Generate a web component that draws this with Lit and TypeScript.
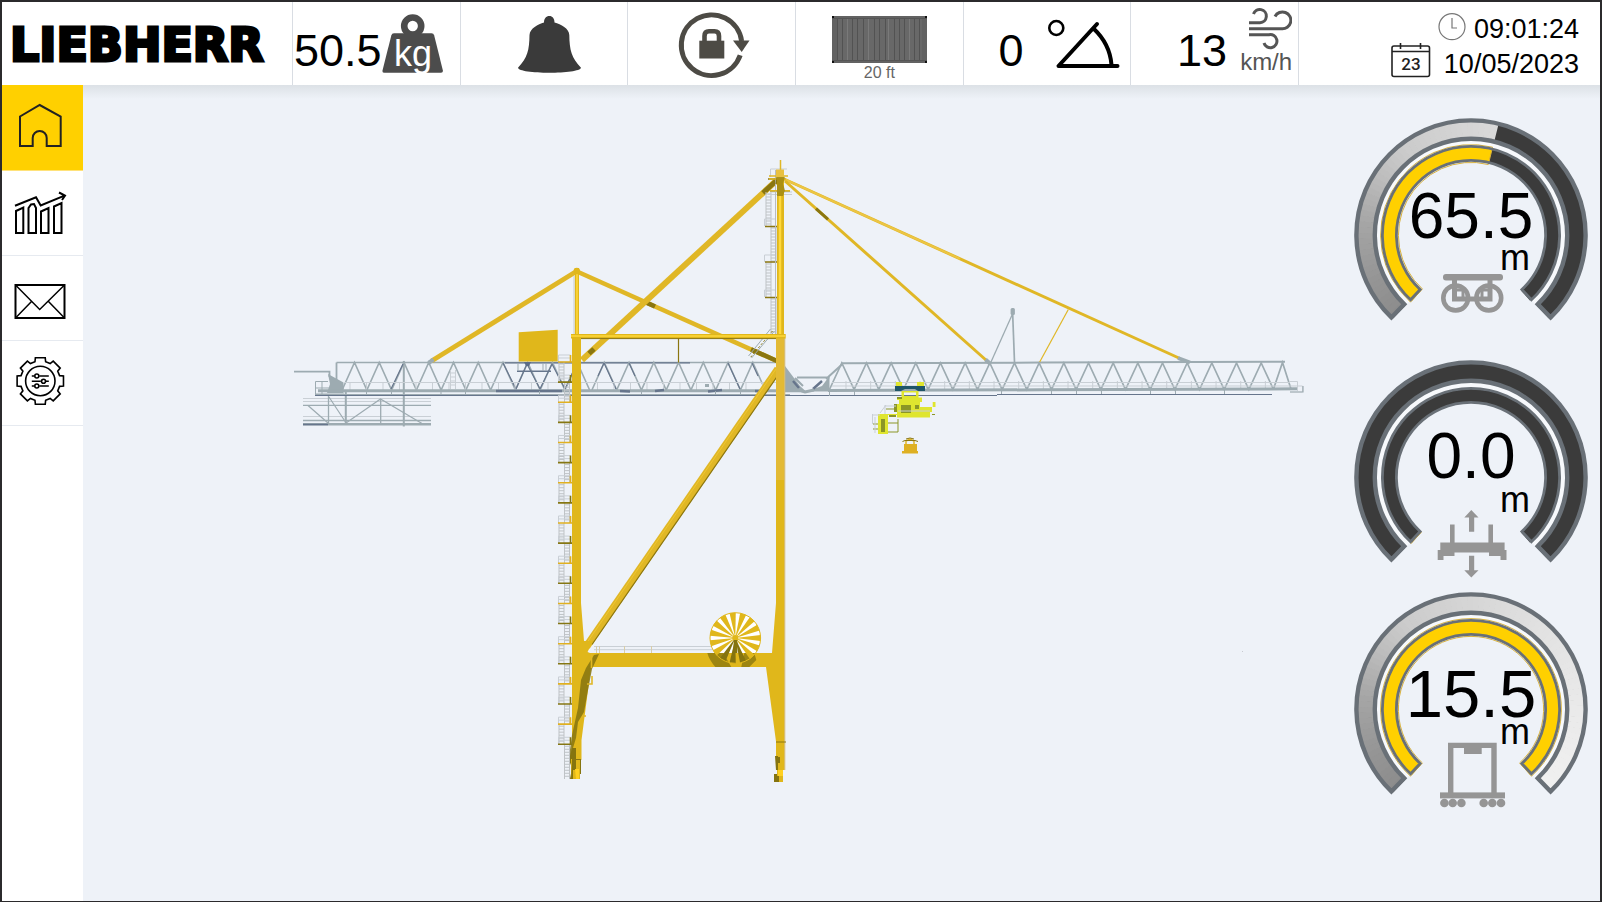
import { LitElement, html, svg, css } from "lit";
import { customElement, property } from "lit/decorators.js";

type GaugeKind = "travel" | "hoist" | "gantry";

const polar = (r: number, deg: number): [number, number] => {
  const a = (deg * Math.PI) / 180;
  return [r * Math.sin(a), -r * Math.cos(a)];
};
const pt = (p: [number, number]) => `${p[0].toFixed(2)} ${p[1].toFixed(2)}`;

/** Closed ring segment between two radii; angles are measured clockwise from the top. */
const band = (r0: number, r1: number, a0: number, a1: number) => {
  const large = a1 - a0 > 180 ? 1 : 0;
  return `M${pt(polar(r1, a0))}A${r1} ${r1} 0 ${large} 1 ${pt(polar(r1, a1))}L${pt(polar(r0, a1))}A${r0} ${r0} 0 ${large} 0 ${pt(polar(r0, a0))}Z`;
};

const SHADES: [number, number][] = [
  [-138, 140], [-110, 152], [-85, 166], [-60, 188], [-40, 203], [0, 214], [40, 226], [90, 234], [138, 241],
];
const shade = (a: number) => {
  for (let i = 1; i < SHADES.length; i++) {
    const [a1, v1] = SHADES[i];
    const [a0, v0] = SHADES[i - 1];
    if (a <= a1) return Math.round(v0 + ((v1 - v0) * (a - a0)) / (a1 - a0));
  }
  return 241;
};

@customElement("crane-gauge")
export class CraneGauge extends LitElement {
  @property() kind: GaugeKind = "travel";
  @property() value = "";
  @property({ type: Number }) level = 0;
  @property({ type: Number }) baseline = 0;

  static styles = css`
    :host { display: block; }
    svg { display: block; width: 100%; overflow: visible; font-family: "Liberation Sans", Arial, sans-serif; }
    .value { font-size: 64px; text-anchor: middle; }
    .value.large { font-size: 67px; }
    .unit { font-size: 36px; text-anchor: middle; }
    .edge { fill: none; stroke: #697077; stroke-linejoin: miter; }
    .off { fill: #3b3b3b; }
    .on { fill: #ffd000; }
    .rim { fill: none; stroke: #d9b23c; stroke-width: 1; }
    .gap { fill: #f7f9fc; }
    .glyph { fill: #959595; stroke: none; }
    .line { fill: none; stroke: #959595; }
  `;

  private icon() {
    if (this.kind === "travel")
      return svg`
        <rect class="glyph" x="-28" y="39" width="60" height="6.6" rx="3"/>
        <circle class="line" cx="-15.3" cy="63" r="12.4" stroke-width="4.6"/>
        <circle class="line" cx="17.8" cy="63" r="12.4" stroke-width="4.6"/>
        <path class="line" stroke-width="5" d="M-16.5 45V64H19V45"/>
        <path class="line" stroke-width="3" d="M-19 55H-8V63M21 55H11V63"/>`;
    if (this.kind === "hoist")
      return svg`
        <path class="glyph" d="M-6.700 40.600 0.300 33 7.500 40.600H3.200V54.700H-2V40.600Z"/>
        <path class="glyph" d="M-6.700 93.200 0.300 100.600 7.500 93.200H3.200V78.700H-2V93.200Z"/>
        <path class="glyph" d="M-30.700 65.500H-21V47.500H-16.400V65.500H17.400V47.500H22V65.500H33.600V73H35.500V83H29.500V79H18V75.600H-16.500V79H-27.500V83H-33.300V73H-30.700Z"/>`;
    return svg`
      <path class="line" stroke-width="5.4" d="M-20.300 84V36.400H23V84"/>
      <rect class="glyph" x="-7" y="38" width="17.700" height="7"/>
      <rect class="glyph" x="-31" y="83.400" width="65" height="6"/>
      ${[-26.6, -18.3, -9.6, 12.7, 21.3, 30].map((x) => svg`<circle class="glyph" cx=${x} cy="94" r="4.300"/>`)}`;
  }

  render() {
    const A = 137;
    const B = 138;
    const outerEnd = -A + (2 * A + 0.5) * this.level;
    const innerEnd = -B + 2 * B * this.level;
    const parts = [];
    if (this.level > 0) {
      const stop = Math.min(outerEnd, A);
      for (let a = -A; a < stop; a += 3) {
        const v = shade(a);
        parts.push(svg`<path d=${band(96, 114, a, Math.min(a + 3.4, stop))} fill=${`rgb(${v},${v},${v})`}/>`);
      }
    }
    return html`
      <svg viewBox="-117 -117 234 220" role="img" aria-label=${`${this.value} m`}>
        <path class="gap" d=${band(89, 96, -A, A)} />
        <path class="off" d=${band(97, 114, -A, A)} />
        ${parts}
        <path class="edge" stroke-width="4.400" d=${band(96.2, 114.6, -A + 1, A - 1)} />
        <path class="off" d=${band(75, 88, -B, B)} />
        ${this.level > 0
          ? svg`<path class="on" d=${band(75, 88, -B, Math.min(innerEnd, B))}/>
                <path class="rim" d=${band(72.6, 90.4, -B, Math.min(innerEnd, B))}/>`
          : svg`<path class="rim" d=${`M${pt(polar(74, -B))}L${pt(polar(90, -B))}`}/>`}
        <path class="edge" stroke-width="2.800" d=${band(74.6, 88.6, -B + 1, B - 1)} />
        <text class="value ${this.kind === "gantry" ? "large" : ""}" x="0" y=${this.baseline}>${this.value}</text>
        <text class="unit" x="44" y="35">m</text>
        ${this.icon()}
      </svg>
    `;
  }
}

@customElement("crane-scene")
export class CraneScene extends LitElement {
  static styles = css`
    :host { display: block; }
    svg { display: block; width: 100%; }
    .y { fill: #e0b71b; }
    .ys { fill: none; stroke: #e0b726; }
    .hi { fill: none; stroke: #ffd83c; }
    .dk { fill: #85740f; }
    .dks { fill: none; stroke: #8a7610; }
    .g { fill: #9dabb1; }
    .gs { fill: none; stroke: #9dabb1; }
    .bs { fill: none; stroke: #66758c; }
    .ls { fill: none; stroke: #c9cfd5; stroke-width: 1; }
    .lime { fill: #dfe52f; }
    .olive { fill: #8b9626; }
    .olives { fill: none; stroke: #8b9626; stroke-width: 1; }
  `;

  private zigzag(first: number, step: number, count: number, top: number, bottom: number) {
    let d = `M${first - step / 2} ${bottom}`;
    for (let i = 0; i < count; i++) d += `L${first + i * step} ${top}L${first + (i + 0.5) * step} ${bottom}`;
    return d;
  }

  private ladder(x: number, y0: number, y1: number) {
    let d = `M${x} ${y0}V${y1}M${x + 5} ${y0}V${y1}`;
    for (let y = y0 + 2; y < y1; y += 3) d += `M${x} ${y}H${x + 5}`;
    return svg`<path d=${d} fill="none" stroke="#bfc3c6" stroke-width="1"/>`;
  }

  private stairs() {
    const out = [];
    for (let i = 0; i < 20; i++) {
      const y = 362 + i * 20.12;
      const even = i % 2 === 0;
      const end = i === 19 ? 779 : y + 20;
      out.push(this.ladder(even ? 559 : 564.5, y, end));
      out.push(svg`<path class="ls" d=${`M558.500 ${y}V${y - 7}H570.500M558.500 ${y - 4}H570`}/>`);
      out.push(svg`<path fill="none" stroke=${even ? "#e0b020" : "#857612"} stroke-width="1.600" d=${`M558 ${y}H572M570.500 ${y}V${y - 7}`}/>`);
    }
    return out;
  }

  private reel() {
    const spokes = [];
    for (let i = 0; i < 15; i++) {
      const a = 90 + i * 24;
      const under = a > 146 && a < 224;
      spokes.push(svg`<path d=${`M0 0L${pt(polar(25.5, a - 7))}L${pt(polar(25.5, a + 7))}Z`} fill=${under ? "#85740f" : "#e0b71b"}/>`);
    }
    return svg`<g transform="translate(735.300 638)">
      <path d="M-25.500 0A25.500 25.500 0 0 1 25.500 0Q25.500 8 20 15H-20Q-25.500 8-25.500 0Z" fill="#fff"/>
      <path class="dk" opacity=".75" d="M-28 15H-12L-4 29H-20Q-26 22-28 15ZM19 15L21 22 14 29H6L9 15Z"/>
      ${spokes}
      <circle r="25.300" fill="none" stroke="#e0b71b" stroke-width="1"/>
      <circle r="3" class="y"/><path class="dk" d="M-1.500 2H2V15H-2Z"/>
    </g>`;
  }

  private posts(x0: number, x1: number, step: number, y0: number, y1: number) {
    let d = "";
    for (let x = x0; x < x1; x += step) d += `M${x} ${y0}V${y1}`;
    return svg`<path class="ls" d=${d}/>`;
  }

  render() {
    return html`
      <svg viewBox="83 85 1257 815" role="img" aria-label="Container crane side view">
        <!-- rear platform -->
        <path class="gs" stroke-width="1.800" d="M294 371.700H329.500V377M336.500 362.500V390" />
        <path class="g" d="M328 374L343.500 382.500V393H327L330 384Z" />
        <path class="gs" d="M315.500 381.500H328M315.500 381.500V394H344M315.500 388H344M322 381.500V394" />
        <path class="ls" d="M303 398.500H431M303 401.500H431M303 416.500H431" />
        <path class="gs" stroke-width="1.300" d="M303 405.400H431M303 420.500H431M380.700 399V423M328.500 395V423" />
        <path class="gs" stroke-width="2.600" d="M303 424.300H431" />
        <path class="bs" stroke-width="1.600" d="M303 424.500H328" />
        <path class="gs" stroke-width="2" d="M345.800 392V423M403.800 361V426.500" />
        <path class="gs" stroke-width="1.200" d="M308 405.500L328 423M329 397L345.500 422M346 423L380.500 399L422 423.500" />

        <!-- boom truss, rear half -->
        <path class="gs" stroke-width="1.500" d="M336.500 362.600H776" />
        <path class="bs" stroke-width="1.200" d="M505 362.800H690" />
        <path class="gs" stroke-width="1.600" d=${this.zigzag(354.5, 24.75, 10, 362.5, 390)} />
        <path class="gs" stroke-width="1.600" d=${this.zigzag(604.3, 24.75, 7, 362.5, 390)} />
        <path class="bs" stroke-width="1.200" d="M503 363L516 389L527 364L540 389L552 364L565 389L573 372M604 363L598 376M604 363L616 389M629 363L635 376M728 363L740 389M752 363L758 376M403 364L391 389" />
        <path class="ls" d="M345 382.500H776" />
        ${this.posts(350, 776, 16.5, 382.5, 390)}
        <path class="gs" stroke-width="3" d="M318 390.700H800" />
        <path class="bs" stroke-width="2.600" d="M496 391H562M620 391L630 391.500M655 391L664 390M708 391.500L722 390M755 391L766 391.500" />
        <path class="bs" stroke-width="1" d="M315 395.500H997" />
        <path class="gs" d="M315 394.500H790M366.500 391V395M391.500 391V395M441 391V395M465.500 391V395M539.500 391V395M641.500 391V395M715.500 391V395M740.500 391V395" />
        <path class="g" d="M705 384h4v3h-4z" />
        <path class="ls" d="M450.500 370V389M455.500 370V389M450 373H456M450 377H456M450 381H456M450 385H456" />

        <!-- machinery house -->
        <path class="y" d="M518.700 332.300L557.700 329.700V361.500H518.700Z" />
        <path class="bs" stroke-width="1.400" d="M517 371.300H551" />
        <path class="gs" d="M518 364V371M543 363V371M546 363V371" />
        <path d="M524 362h7l-2 4h-3z" fill="#5a6a86" />

        <!-- boom truss, front half -->
        <path class="g" d="M785 366L800 386L806 391.500H785ZM829.500 376V391.500H806L822 386Z" />
        <path class="gs" stroke-width="2" d="M797 377.400H829.500M826 379L842.500 364M795 378L803 386" />
        <path class="bs" stroke-width="2.400" d="M793 381L799 388M813 389L822 381" />
        <path class="gs" stroke-width="3" d="M798 390L805 392L814 390" />
        <path class="gs" stroke-width="2" d="M841 363.300L1040 362.600L1285 361.700" />
        <path class="gs" stroke-width="1.700" d=${this.zigzag(841.8, 24.67, 18, 363, 389.5)} />
        <path class="gs" stroke-width="1.700" d="M1273.500 389L1282.500 362.500L1291 389" />
        <path class="ls" d="M832 382.500H1290M832 386H1290" />
        ${this.posts(846, 1285, 24.67, 381, 389)}
        <path class="gs" stroke-width="3" d="M828 390.500L1040 389.800L1298 388.800" />
        <path class="bs" stroke-width="1" d="M997 394.500H1272" />
        <path class="gs" d="M829.500 390V396M854.500 390V395M1001.500 390V394M1051.500 390V394M1076.500 390V394M1101.500 390V394M1150.500 390V394M1175.500 390V394M1224.500 390V394" />
        <path class="ls" stroke-width="1.500" d="M1290 381.500H1297.500V391M1290 386H1302.500V392H1290" />
        <path class="gs" stroke-width="1.200" d="M1290 392H1303V386" />

        <!-- auxiliary mast and hangers -->
        <path class="gs" stroke-width="1.300" d="M1012.500 314L991 362" />
        <path class="gs" stroke-width="1.700" d="M1012.600 312L1014.500 362" />
        <rect class="g" x="1010.600" y="308" width="4.300" height="7" rx="1.500" />
        <path class="ys" stroke-width="1.200" d="M1068.300 309.500L1039.700 362" />

        <!-- stays -->
        <path class="ys" stroke-width="3" d="M784 179L1180 358.500" />
        <path fill="none" stroke="#ecc544" stroke-width="2" d="M784 179L960 258.800" />
        <path class="ys" stroke-width="3" d="M785 181L986.500 360.500" />
        <path class="dks" stroke-width="3" d="M816 208.600L828 219.300" />
        <path class="gs" stroke-width="4" d="M1178 358L1190 362.500M985.500 359.500L990.500 364" />
        <path class="ys" stroke-width="4.800" d="M431.500 361L577 271" />
        <path class="gs" stroke-width="4" d="M428.500 363L433.500 359.500" />
        <path class="ys" stroke-width="4.600" d="M577 271.500L777 361" />
        <path class="dks" stroke-width="4.600" d="M646 302.300L655 306.500M751 349.300L777 361" />
        <path class="ys" stroke-width="6" d="M582 360L777 180" />
        <path class="dks" stroke-width="5" d="M589 353.500L594 349M763 193L777 180" />
        <path class="dks" stroke-width="1.200" d="M678.500 338V362.500" />

        <!-- mast ladders -->
        ${this.ladder(766, 192, 226)} ${this.ladder(771, 226, 262)} ${this.ladder(766, 262, 297)} ${this.ladder(771, 297, 334)}
        <path class="ls" d="M764.500 226V219H776M764.500 262V255H776M764.500 297V290H776M770.500 177V169H787M768 194.500H792M770 192H792" />
        <path class="dks" stroke-width="1.500" d="M765 226.500H777M765 262H777M765 297.500H777M768 179H777M770 190.800H790" />
        <path class="gs" d="M770.500 329L748.500 356M774.500 331L751.500 358" />
        <path class="dks" stroke-dasharray="2 2" d="M772.500 331L750 358" />

        <!-- masts and top beam -->
        <rect x="775" y="170" width="1" height="164" fill="#b9bcbf" />
        <rect class="y" x="777" y="176" width="7" height="160" />
        <path class="hi" stroke-width="2.500" d="M780 196V335" />
        <path class="ys" stroke-width="1.500" d="M780.500 160V170M769 176H788M769 179H786M770 190.800H790" />
        <rect x="776" y="169.500" width="8" height="8" fill="#e8c040" />
        <path class="dk" d="M776 177H785L783 184L785 190L783 196H777V184L775 184Z" opacity=".6" />
        <rect class="y" x="574.800" y="268" width="4.200" height="68" />
        <path class="hi" stroke-width="1.600" d="M577 273V334" />
        <path class="ls" stroke-width="1.500" d="M574 276V334" />
        <circle class="y" cx="576.800" cy="271" r="3.200" />

        <!-- brace and portal -->
        <path class="ys" stroke-width="7.500" d="M778 369L586.500 646.500" />
        <path class="dks" stroke-width="1.200" d="M780.600 371.500L592 644.500" />
        <path class="hi" stroke-width="1" opacity=".5" d="M776 369L585 645.500" />
        <path class="y" d="M572 335H581V603L584 641H593L587.500 652L590 653H772L776 603V335H785V770H776V741.500L766 667H591L581.500 740V760H572Z" />
        <path fill="#e3ba35" d="M776 338H785V480H776Z" />
        <path fill="#d8bd70" d="M784 338H785.300V770H784Z" />
        <path class="y" d="M571 334H785.700V338.500H571Z" />
        <path class="hi" stroke-width="1.400" d="M571 336H785" />
        <path class="dks" stroke-width="1" d="M581 338.600H776" />

        <!-- lower walkway -->
        <path class="ls" d="M594 646.500H713M594 649.700H713" />
        <path stroke="#d8cda8" fill="none" d="M596.500 646V653M599.500 646V653M624.500 646V653M651.500 646V653" />
        <path class="dk" opacity=".85" d="M594 655L599 654L592 669L588 690L584 712L578 722L576 738L573 748L572 758L569 757L572 735L578 708L581 680L586 668Z" />
        <path class="ys" stroke-width="1.600" d="M591.500 654V668M587 684H592V676M582 716H586" />
        ${this.reel()}

        <!-- feet -->
        <path class="dk" d="M572 748L576 748V760H581V774H578L572 779H570L572 768L569 760ZM775 756H778V770H776ZM774 774H777V782H774Z" />
        <path class="y" d="M571 779V759H580V779ZM777 770H783V782H777Z" />
        <path class="dk" d="M572 760H576V770H573V779H571ZM778 757H780V763H778ZM777 776H779V782H777Z" />
        <path fill="#ffd020" d="M575 769H579V779H576ZM778 770H783V776H778Z" />
        <path class="dks" stroke-width="1" d="M776 742H786M572 759.500H581" />
        <g>${this.stairs()}</g>

        <!-- trolley and cabin -->
        <path class="lime" d="M896 382H902V386H896ZM917 382H924V386H917Z" />
        <path fill="#1f5568" d="M895 386H925V391H918L915 389H905L901 391H895Z" />
        <path d="M901.500 391H918.500V399H901.500ZM904 392.500V396H916V392.500Z" fill="#dfe52f" fill-rule="evenodd" />
        <path class="lime" d="M897 397.500H922V402H920V407H930V417.500H897V415H888V434H878V414H897V404H899V400H897Z" />
        <path class="lime" d="M932.700 402H935.500V407H932.700ZM929 407H932V412H929Z" />
        <path class="olive" d="M901 405H911V413H901ZM914 405H919V409H914ZM881 419H885V432H881ZM897 397H902V399H897ZM894 404H897V412H894ZM889 415H896V417H889Z" />
        <path class="lime" d="M911 402H915V415H911Z" />
        <path class="olives" d="M888 423H898M888 432H898V419M873 424H878M873 429H878M932 414.500H935M886 409H897" />
        <path class="ls" d="M872.500 414V424M875 417V433M885 405V414M885 406H896M898 411H930M873 415H880M880 413L886 405" />
        <path d="M904 444H917V451H918V453.500H902V451H904Z" fill="#deb023" />
        <path class="ys" stroke-width="1.500" d="M906 444V441L910 439L914 441V444" />
        <path class="dks" stroke-width="1" d="M902.500 441.500L905 440.500H915L918 441.500M906 439L910 438L914 439" />
        <rect x="1242" y="651" width="1" height="1" fill="#c8cbd0" />
      </svg>
    `;
  }
}

@customElement("app-root")
export class AppRoot extends LitElement {
  static styles = css`
    :host {
      display: flex;
      flex-direction: column;
      box-sizing: border-box;
      min-height: 100vh;
      border: 2px solid #2b2a2c;
      border-bottom-width: 1px;
      background: #eef2f8;
      color: #000;
      font-family: "Liberation Sans", Arial, sans-serif;
    }
    svg { display: block; flex: none; }
    header {
      display: grid;
      grid-template-columns: 290px repeat(6, 5fr) 9fr;
      height: 83px;
      background: #fff;
    }
    .cell {
      box-sizing: border-box;
      display: flex;
      align-items: center;
      border-left: 1px solid #d9dde3;
      min-width: 0;
    }
    .logo {
      display: flex;
      align-items: center;
      padding: 3px 0 0 8px;
      font-family: "DejaVu Sans", sans-serif;
      font-weight: 700;
      font-size: 46px;
      line-height: 52px;
      -webkit-text-stroke: 3px #000;
    }
    .value { font-size: 45px; line-height: 52px; padding-top: 14px; }
    .load { padding-left: 1px; }
    .kg { font-size: 36px; fill: #fff; }
    button.cell {
      margin: 0;
      padding: 0;
      background: none;
      border-width: 0 0 0 1px;
      cursor: pointer;
    }
    .box { flex-direction: column; padding-top: 14px; }
    .small { font-size: 16px; line-height: 16px; color: #666; padding-top: 2px; }
    .angle { justify-content: flex-end; gap: 25px; padding-right: 10px; }
    .wind { justify-content: flex-end; gap: 13px; padding-right: 6px; }
    .speed { display: flex; flex-direction: column; align-items: flex-end; align-self: flex-start; padding-top: 5px; }
    .unit { font-size: 24px; line-height: 24px; color: #555; }
    .clock { flex-direction: column; align-items: flex-end; justify-content: center; padding: 7px 21px 0 0; }
    .row { display: flex; align-items: center; height: 35px; font-size: 27px; gap: 8px; }
    .row.date { gap: 13px; }
    .day { font-family: Roboto, sans-serif; font-weight: 500; font-size: 17px; text-anchor: middle; fill: #222; }
    .body { display: flex; flex: 1; }
    nav { flex: none; width: 81px; background: #fff; }
    nav a {
      display: block;
      box-sizing: border-box;
      height: 85px;
      border-bottom: 1px solid #e6eaf0;
    }
    nav a.active { height: 86px; background: #ffd000; border-color: #ffe27a; }
    nav svg { fill: none; stroke: #000; stroke-width: 2; }
    main {
      flex: 1;
      display: grid;
      grid-template-columns: 1fr 260px;
      align-items: start;
      min-width: 0;
      background: linear-gradient(#dce1e6, #eef2f8 14px);
    }
    .gauges { display: flex; flex-direction: column; gap: 12px; padding: 33px 12px 0 14px; }
    .first { padding-bottom: 10px; }
  `;

  private gear() {
    let d = "";
    for (let i = 0; i < 8; i++) {
      const a = i * 45;
      d += `${i ? "L" : "M"}${pt(polar(20, a - 15.5))}L${pt(polar(23.7, a - 12))}L${pt(polar(23.7, a + 12))}L${pt(polar(20, a + 15.5))}`;
    }
    return svg`<g transform="translate(38.300 41)" stroke-width="1.600">
      <path d=${d + "Z"}/><circle r="14.700"/>
      <path d="M-8.500-5H-6M-1-5H8.500M-8.500 0.300H0.500M5.500 0.300H8.500M-8.500 5H-6M-1 5H8.500"/>
      <circle cx="-3.500" cy="-5" r="2"/><circle cx="3.200" cy="0.300" r="2"/><circle cx="-3.500" cy="5" r="2"/>
    </g>`;
  }

  render() {
    const ribs = [0, 5, 10, 15, 20, 26, 31, 37, 42, 48, 51, 57, 62, 67, 72, 77, 82];
    return html`
      <header>
        <div class="logo">LIEBHERR</div>
        <div class="cell load">
          <span class="value">50.5</span>
          <svg width="61" height="60" viewBox="382 15 61 60">
            <circle cx="412.700" cy="27" r="8.500" fill="none" stroke="#4c4c4c" stroke-width="6.600" />
            <path d="M394 34.300H431.500Q433.600 34.300 434.200 36.500L442.900 71.500Q443.200 73.800 441 73.800H384.500Q382 73.800 382.500 71.500L391.300 36.500Q391.900 34.300 394 34.300Z" fill="#4c4c4c" />
            <text class="kg" x="394" y="67">kg</text>
          </svg>
        </div>
        <button class="cell" aria-label="Alarms">
          <svg width="167" height="83" viewBox="460 2 167 83">
            <path fill="#3a3a3a" d="M548.300 16C551.500 16 553.500 18.500 553.500 22.500C560 24.500 568 28 568.300 35C568.500 50 570.500 58 580 67.700C579.500 71 564 72.700 548.300 72.700C532 72.700 517.500 71 517 67.700C526.500 58 528.300 50 528.500 35C529 28 537 24.500 543 22.500C543 18.500 545.200 16 548.300 16Z" />
          </svg>
        </button>
        <button class="cell" aria-label="Slewing lock">
          <svg width="167" height="83" viewBox="628 2 167 83">
            <path d="M740.200 55.200A30.300 30.300 0 1 1 741.600 41" fill="none" stroke="#4d4b45" stroke-width="5" />
            <path d="M733 40.600H749.500L741.700 52Z" fill="#4d4b45" />
            <rect x="699.300" y="40.700" width="25" height="17.800" fill="#4d4b45" />
            <path d="M704.500 42V36Q704.500 31.300 709 31.300H714.500Q719 31.300 719 36V42" fill="none" stroke="#4d4b45" stroke-width="4.600" />
          </svg>
        </button>
        <div class="cell box">
          <svg width="95" height="47" viewBox="0 0 95 47">
            <rect width="95" height="47" fill="#626262" />
            <rect x="5" y="3" width="85" height="41" fill="#686868" />
            ${ribs.map((x, i) => svg`<rect x=${x + 5} y="3" width="1" height="41" fill=${i % 4 === 2 ? "#7a7a7a" : "#525252"}/>`)}
            <path d="M0 2.500H95M0 44.500H95" stroke="#555" />
            <path d="M0 0h2v2h-2zM93 0h2v2h-2zM0 45h2v2h-2zM93 45h2v2h-2z" fill="#111" />
          </svg>
          <span class="small">20 ft</span>
        </div>
        <div class="cell angle">
          <span class="value">0</span>
          <svg width="72" height="60" viewBox="1048 14 72 60" fill="none" stroke="#000">
            <ellipse cx="1056.300" cy="28" rx="7" ry="7" stroke-width="2.600" />
            <path d="M1117.500 66H1058.500L1097 24" stroke-width="4" stroke-linecap="round" stroke-linejoin="round" />
            <path d="M1093.500 28.500Q1110 44 1111.500 65" stroke-width="4" />
          </svg>
        </div>
        <div class="cell wind">
          <span class="value">13</span>
          <div class="speed">
            <svg width="43" height="43" viewBox="1248 7 43 43" fill="none" stroke="#555" stroke-width="3">
              <path d="M1248 22.700H1259A6.600 6.600 0 1 0 1252.500 14" />
              <path d="M1248 28.700H1280.500A8.400 8.400 0 1 0 1274 16.500" />
              <path d="M1248 34.700H1268A6.600 6.600 0 1 1 1263 43" />
            </svg>
            <span class="unit">km/h</span>
          </div>
        </div>
        <div class="cell clock">
          <div class="row">
            <svg width="28" height="34" viewBox="0 0 28 34" fill="none" stroke="#777" stroke-width="1.200">
              <circle cx="14" cy="13.700" r="13" /><path d="M14 5V15H19" />
            </svg>
            <time>09:01:24</time>
          </div>
          <div class="row date">
            <svg width="40" height="43" viewBox="0 0 40 43" fill="none" stroke="#222" stroke-width="1.600">
              <rect x="1" y="3" width="37.500" height="30.500" rx="2" />
              <path d="M1 8.500H38.500M9.500 0V6M29.500 0V6" />
              <text class="day" x="20" y="27" stroke="none">23</text>
            </svg>
            <time>10/05/2023</time>
          </div>
        </div>
      </header>
      <div class="body">
        <nav aria-label="Main">
          <a class="active" href="#home" aria-label="Home">
            <svg width="81" height="84" viewBox="0 0 81 84">
              <path d="M18 31.500L37.700 20L58.700 31.500V61H44.700V53A7 7 0 0 0 30.700 53V61H18Z" stroke="#222" />
            </svg>
          </a>
          <a href="#statistics" aria-label="Statistics">
            <svg width="81" height="84" viewBox="0 0 81 84" stroke-width="1.700">
              <path d="M14 40L21.300 36.500V62H14ZM26.500 37L29 33.500L32 33L34 37V62H26.500ZM39 40.500L46.500 37V62H39ZM52 35.500L59.500 32V62H52Z" />
              <path d="M13 34.700L34 26.200L38.700 34.500L62.500 24.700M57 21.500L63 24.700L60 29" />
            </svg>
          </a>
          <a href="#messages" aria-label="Messages">
            <svg width="81" height="84" viewBox="0 0 81 84" stroke-width="1.600">
              <path d="M13.500 29H62.500V62H13.500Z" />
              <path d="M13.500 29L37.700 53.500L62.500 29M29.500 45.500L13.500 62M46.500 45.500L62.500 62" stroke-width="1.500" />
            </svg>
          </a>
          <a href="#settings" aria-label="Settings">
            <svg width="81" height="84" viewBox="0 1 81 84">${this.gear()}</svg>
          </a>
        </nav>
        <main>
          <crane-scene></crane-scene>
          <div class="gauges">
            <crane-gauge class="first" kind="travel" value="65.5" level="0.550" baseline="3"></crane-gauge>
            <crane-gauge kind="hoist" value="0.0" level="0" baseline="1"></crane-gauge>
            <crane-gauge kind="gantry" value="15.5" level="1" baseline="8"></crane-gauge>
          </div>
        </main>
      </div>
    `;
  }
}
